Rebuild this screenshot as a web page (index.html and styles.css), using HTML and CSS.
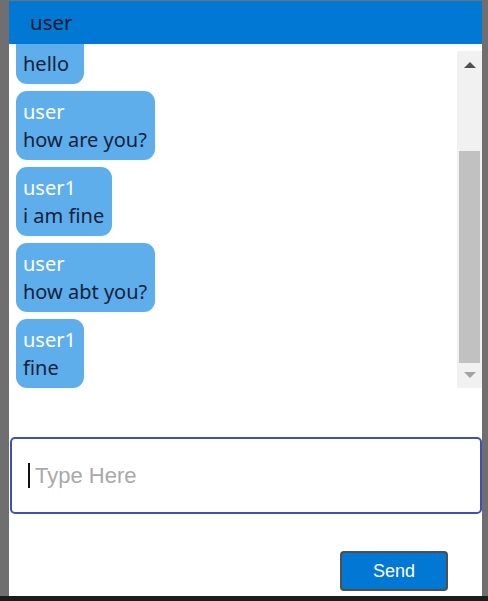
FILE: index.html
```html
<!DOCTYPE html>
<html>
<head>
<meta charset="utf-8">
<link rel="stylesheet" href="styles.css">
</head>
<body>
<div class="modal">
  <div class="header">user</div>
  <div class="chat">
    <div class="messages">
      <div class="bubble"><div class="name">user1</div><div class="text">hello</div></div>
      <div class="bubble"><div class="name">user</div><div class="text">how are you?</div></div>
      <div class="bubble"><div class="name">user1</div><div class="text">i am fine</div></div>
      <div class="bubble"><div class="name">user</div><div class="text">how abt you?</div></div>
      <div class="bubble"><div class="name">user1</div><div class="text">fine</div></div>
    </div>
    <div class="scrollbar">
      <div class="sb-btn"><span class="arrow-up"></span></div>
      <div class="sb-track"><div class="sb-thumb"></div></div>
      <div class="sb-btn"><span class="arrow-down"></span></div>
    </div>
  </div>
  <div class="input-box">
    <span class="caret"></span>
    <input class="input" type="text" placeholder="Type Here">
  </div>
  <div class="actions">
    <button class="send">Send</button>
  </div>
</div>
<div class="bottom-bar"></div>
</body>
</html>
```
FILE: styles.css
```css
html, body {
  margin: 0;
  padding: 0;
  height: 601px;
  overflow: hidden;
}
body {
  background: #6f6f6f;
  display: flex;
  flex-direction: column;
  font-family: "Noto Sans", "Open Sans", sans-serif;
}
.modal {
  margin: 1px 6px 0 9px;
  height: 595px;
  background: #ffffff;
  display: flex;
  flex-direction: column;
}
.header {
  height: 43px;
  background: #0078d4;
  color: #0f1b2d;
  font-size: 20.5px;
  line-height: 42px;
  padding-left: 21px;
  box-sizing: border-box;
}
.chat {
  height: 344px;
  display: flex;
  align-items: flex-end;
}
.messages {
  flex: 1;
  height: 344px;
  overflow: hidden;
  display: flex;
  flex-direction: column;
  justify-content: flex-end;
  align-items: flex-start;
  gap: 7px;
  padding-left: 7px;
}
.bubble {
  flex-shrink: 0;
  background: #5eaeec;
  border-radius: 11px;
  padding: 7px 8px 7px 7px;
  font-size: 20px;
  line-height: 27.5px;
  color: #16213a;
}
.name {
  color: #ffffff;
}
.scrollbar {
  width: 25px;
  height: 337px;
  background: #f1f1f1;
  display: flex;
  flex-direction: column;
}
.sb-btn {
  height: 25px;
  display: flex;
  align-items: center;
  justify-content: center;
}
.arrow-up {
  width: 0;
  height: 0;
  border-left: 6px solid transparent;
  border-right: 6px solid transparent;
  border-bottom: 6px solid #505050;
  margin-top: 2px;
}
.arrow-down {
  width: 0;
  height: 0;
  border-left: 6px solid transparent;
  border-right: 6px solid transparent;
  border-top: 6px solid #a3a3a3;
  margin-top: -2px;
}
.sb-track {
  flex: 1;
  display: flex;
  flex-direction: column;
  justify-content: flex-end;
  padding: 0 2px 0 2px;
}
.sb-thumb {
  height: 212px;
  background: #c1c1c1;
}
.input-box {
  margin: 49px 0 0 1px;
  height: 77px;
  box-sizing: border-box;
  border: 2px solid #3f51b5;
  border-radius: 5px;
  display: flex;
  align-items: center;
  padding-left: 16px;
}
.caret {
  width: 2px;
  height: 25px;
  background: #111111;
  margin-right: 5px;
}
.input {
  flex: 1;
  border: none;
  outline: none;
  padding: 0;
  font-family: "Liberation Sans", Arial, sans-serif;
  font-size: 22px;
  color: #222;
  background: transparent;
}
.input::placeholder {
  color: #a9a9a9;
}
.actions {
  display: flex;
  justify-content: flex-end;
  padding-right: 34px;
  margin-top: 37px;
}
.send {
  width: 108px;
  height: 40px;
  background: #0078d4;
  border: 2px solid #4f4f4f;
  border-radius: 4px;
  color: #ffffff;
  font-family: "Liberation Sans", Arial, sans-serif;
  font-size: 18px;
  padding: 0;
}
.bottom-bar {
  height: 5px;
  background: #1c1c1c;
}
```
